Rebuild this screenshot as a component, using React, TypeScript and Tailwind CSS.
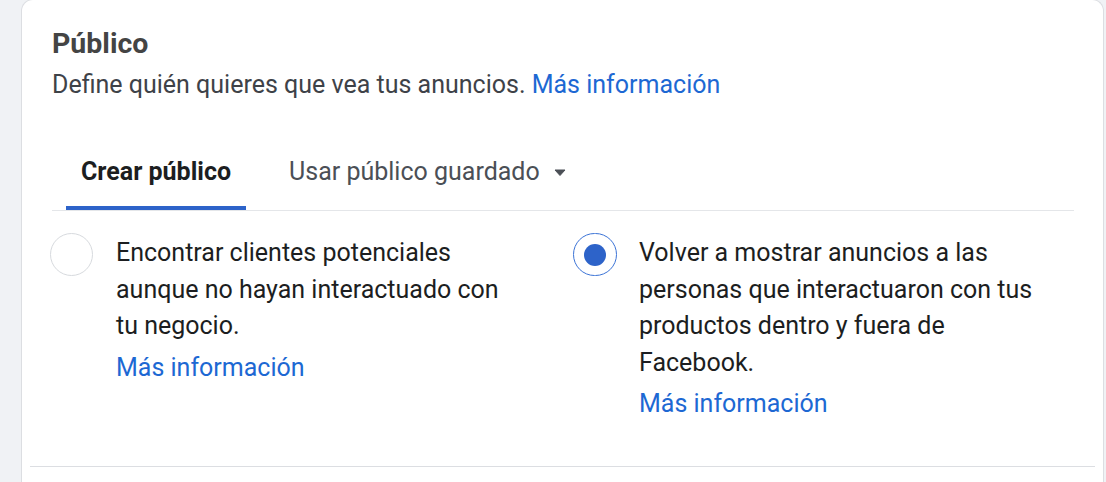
import { useState } from "react";

const font = { fontFamily: "Roboto, 'Liberation Sans', Arial, sans-serif" };

interface OptionProps {
  selected: boolean;
  onSelect: () => void;
  text: string;
}

const AudienceOption = ({ selected, onSelect, text }: OptionProps) => (
  <div className="flex items-start cursor-pointer" onClick={onSelect}>
    <div className="w-[66px] shrink-0 -mt-[2px]">
      {selected ? (
        <div className="w-[44px] h-[43px] rounded-full border border-[#3b73d6] bg-white flex items-center justify-center">
          <div className="w-[22px] h-[22px] rounded-full bg-[#2d63c9]" />
        </div>
      ) : (
        <div className="w-[43px] h-[43px] rounded-full border border-[#d7dade] bg-white" />
      )}
    </div>
    <div className="w-[405px]">
      <p className="text-[25px] leading-[36.5px] text-[#1c1e21]">{text}</p>
      <a className="block mt-[5px] text-[25px] leading-[36.5px] text-[#1d68d3] cursor-pointer">
        Más información
      </a>
    </div>
  </div>
);

export default function App() {
  const [tab, setTab] = useState<"create" | "saved">("create");
  const [option, setOption] = useState(1);

  return (
    <div className="h-screen overflow-hidden flex flex-col bg-[#f0f2f5] pl-[21px] pr-[2px]" style={font}>
      <div className="flex-1 bg-white border border-b-0 border-[#dcdee2] rounded-t-[12px] -mt-px">
        <div className="pl-[30px] pr-[29px] pt-[27px]">
          <h2 className="text-[28.5px] leading-[34px] font-bold text-[#444]">Público</h2>
          <p className="text-[25px] leading-[30px] text-[#3e4248] mt-[9px]">
            Define quién quieres que vea tus anuncios.{" "}
            <a className="text-[#1d68d3] cursor-pointer">Más información</a>
          </p>

          <div className="mt-[46px] border-b border-[#e4e6e9] flex pl-[14px]">
            <button
              onClick={() => setTab("create")}
              className={`px-[15px] pt-[11px] pb-[19px] text-[25px] leading-[30px] border-b-[4px] ${
                tab === "create"
                  ? "font-bold text-[#1c1e21] border-[#2d63c9]"
                  : "text-[#4b4f56] border-transparent"
              }`}
            >
              Crear público
            </button>
            <button
              onClick={() => setTab("saved")}
              className={`ml-[29px] px-[14px] flex items-center gap-[14px] pt-[11px] pb-[19px] text-[25px] leading-[30px] border-b-[4px] ${
                tab === "saved"
                  ? "font-bold text-[#1c1e21] border-[#2d63c9]"
                  : "text-[#4b4f56] border-transparent"
              }`}
            >
              Usar público guardado
              <svg width="12" height="7" viewBox="0 0 12 7" className="mt-[1px]">
                <path d="M1 1h10L6 6.5z" fill="#4b4f56" stroke="#4b4f56" strokeLinejoin="round" />
              </svg>
            </button>
          </div>

          <div className="flex pt-[24px] -ml-[2px]">
            <div className="w-[523px]">
              <AudienceOption
                selected={option === 0}
                onSelect={() => setOption(0)}
                text="Encontrar clientes potenciales aunque no hayan interactuado con tu negocio."
              />
            </div>
            <div className="flex-1">
              <AudienceOption
                selected={option === 1}
                onSelect={() => setOption(1)}
                text="Volver a mostrar anuncios a las personas que interactuaron con tus productos dentro y fuera de Facebook."
              />
            </div>
          </div>
        </div>
        <div className="mx-[8px] mt-[43px] border-t border-[#dcdee2]" />
      </div>
    </div>
  );
}
